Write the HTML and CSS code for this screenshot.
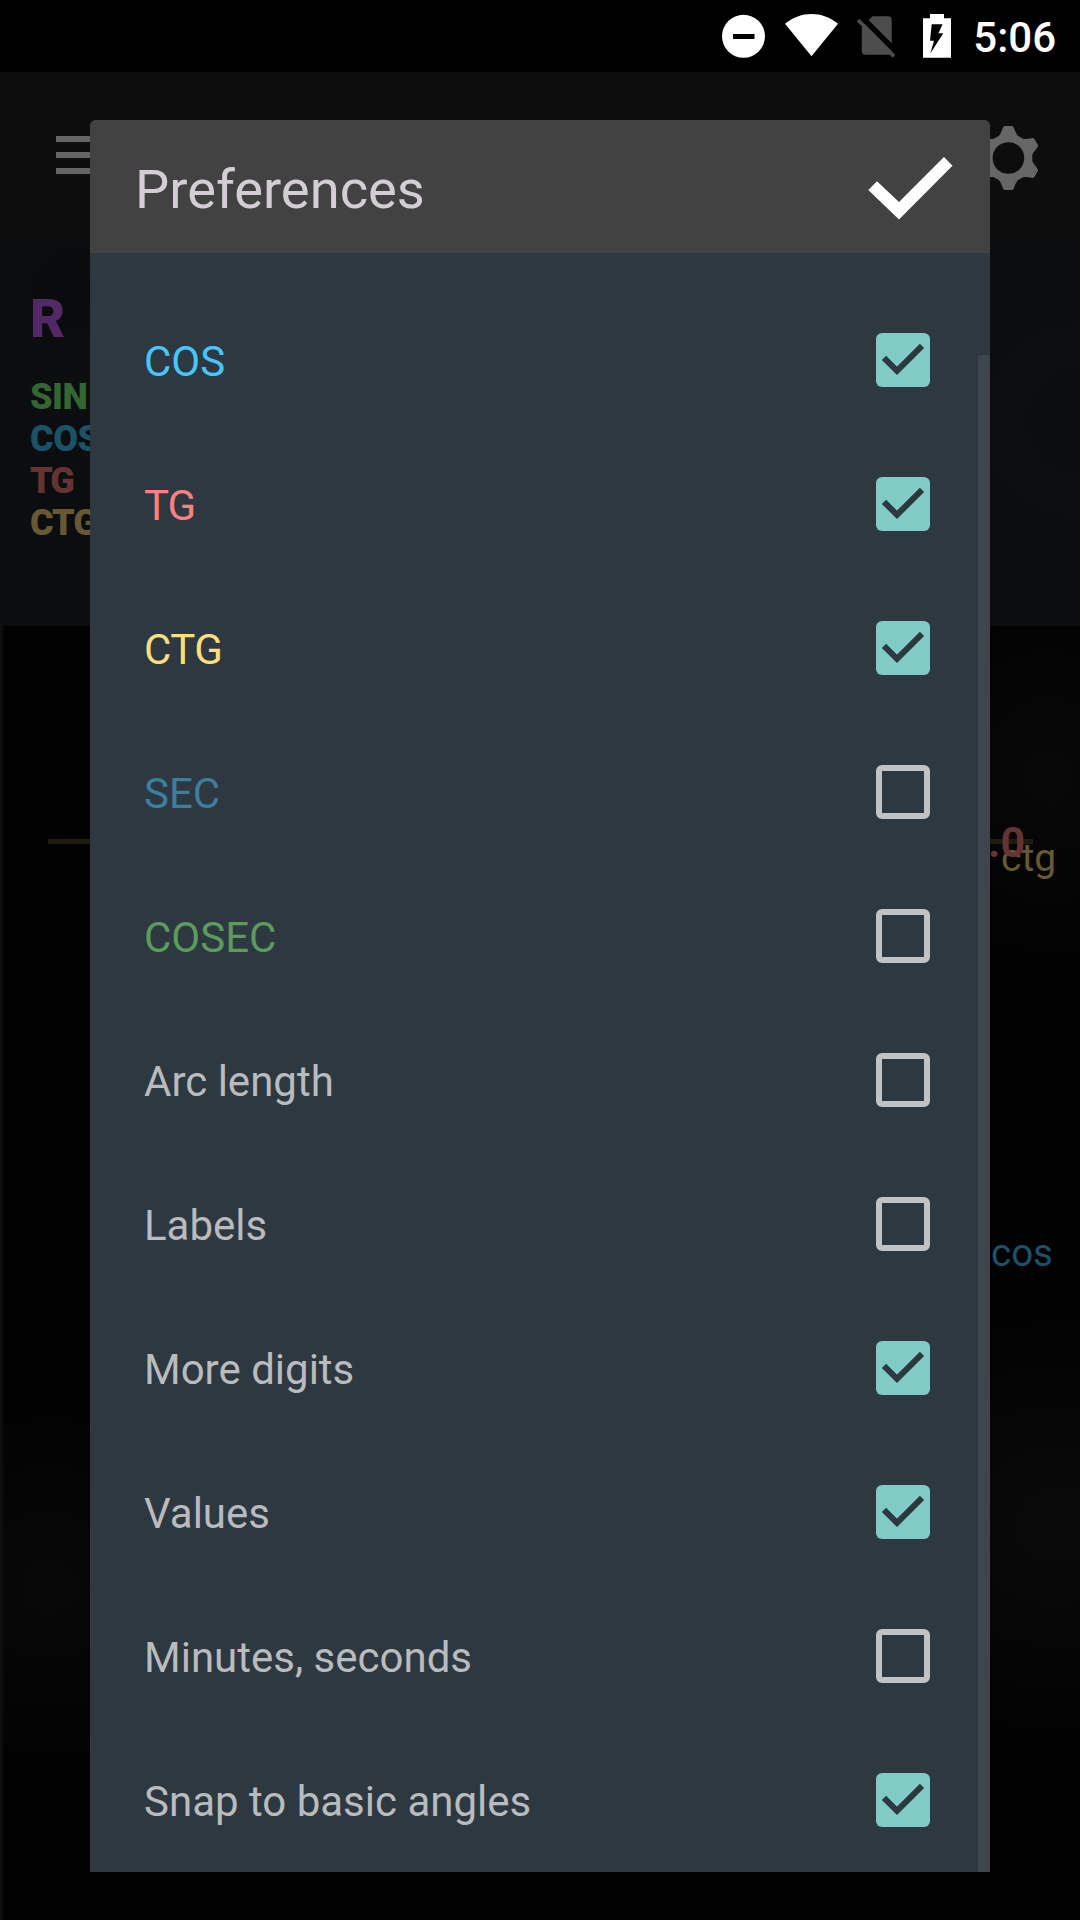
FILE: index.html
```html
<!DOCTYPE html>
<html lang="en">
<head>
<meta charset="utf-8">
<title>Preferences</title>
<link rel="stylesheet" href="styles.css">
</head>
<body>
<div class="screen">
  <header class="status-bar">
    <svg class="status-icons" width="256" height="72" viewBox="704 0 256 72">
      <circle cx="743.5" cy="36.3" r="21.5" fill="#fff"/>
      <path d="M733 34h21.500v5h-21.500z" fill="#000"/>
      <path d="M785 23.700C801 10.800 822 10.800 838 23.700L811.500 56.300z" fill="#fff"/>
      <path d="M872.500 16.300H888a3.700 3.700 0 0 1 3.700 3.700V51a3.700 3.700 0 0 1-3.700 3.700H865.500a3.700 3.700 0 0 1-3.700-3.700V27z" fill="#4d4d4d"/>
      <path d="M861.500 17L898 53.500" stroke="#000" stroke-width="5.500"/>
      <path d="M858 20L894 56.300" stroke="#4d4d4d" stroke-width="3.800"/>
      <path d="M930 14h14v4.300h7V57.700h-28V18.300h7z" fill="#fff"/>
      <path d="M931.700 24.300H942.600L938.400 33.300H943.300L930.300 53.600L934 40.800H930z" fill="#000"/>
    </svg>
    <span class="clock">5:06</span>
  </header>

  <nav class="toolbar">
    <div class="menu-icon"><i></i><i></i><i></i></div>
    <svg class="gear" width="66" height="66" viewBox="-33.400 -33 66 66">
      <defs><path id="tooth" d="M-11-20Q-7.500-24-5.500-30Q-5-32-3.500-32H3.500Q5-32 5.500-30Q7.500-24 11-20z"/></defs>
      <g fill="#666">
        <use href="#tooth"/>
        <use href="#tooth" transform="rotate(60)"/>
        <use href="#tooth" transform="rotate(120)"/>
        <use href="#tooth" transform="rotate(180)"/>
        <use href="#tooth" transform="rotate(240)"/>
        <use href="#tooth" transform="rotate(300)"/>
        <circle r="24"/>
      </g>
      <circle r="15.800" fill="#0d0d0d"/>
    </svg>
  </nav>

  <section class="readout">
    <div class="radius">R</div>
    <div class="fn fn-sin">SIN</div>
    <div class="fn fn-cos">COS</div>
    <div class="fn fn-tg">TG</div>
    <div class="fn fn-ctg">CTG</div>
  </section>

  <main class="plot">
    <div class="axis"></div>
    <span class="plot-label label-ctg">ctg</span>
    <span class="plot-label label-value">.0</span>
    <span class="plot-label label-cos">cos</span>
  </main>

  <div class="dialog">
    <div class="dialog-header">
      <h1>Preferences</h1>
      <svg class="accept" width="86" height="66" viewBox="868 156 86 66">
        <path d="M868.300 190L877 181.300L899 202L944 157L952.500 165.700L899 219.500z" fill="#fff"/>
      </svg>
    </div>
    <div class="options">
      <label class="row cos"><span>COS</span><svg class="box on" viewBox="0 0 54 54"><path d="M8 24.800L21 37.800L46 12.800"/></svg></label>
      <label class="row tg"><span>TG</span><svg class="box on" viewBox="0 0 54 54"><path d="M8 24.800L21 37.800L46 12.800"/></svg></label>
      <label class="row ctg"><span>CTG</span><svg class="box on" viewBox="0 0 54 54"><path d="M8 24.800L21 37.800L46 12.800"/></svg></label>
      <label class="row sec"><span>SEC</span><i class="box"></i></label>
      <label class="row cosec"><span>COSEC</span><i class="box"></i></label>
      <label class="row"><span>Arc length</span><i class="box"></i></label>
      <label class="row"><span>Labels</span><i class="box"></i></label>
      <label class="row"><span>More digits</span><svg class="box on" viewBox="0 0 54 54"><path d="M8 24.800L21 37.800L46 12.800"/></svg></label>
      <label class="row"><span>Values</span><svg class="box on" viewBox="0 0 54 54"><path d="M8 24.800L21 37.800L46 12.800"/></svg></label>
      <label class="row"><span>Minutes, seconds</span><i class="box"></i></label>
      <label class="row"><span>Snap to basic angles</span><svg class="box on" viewBox="0 0 54 54"><path d="M8 24.800L21 37.800L46 12.800"/></svg></label>
      <div class="scrollbar"></div>
    </div>
  </div>
</div>
</body>
</html>
```
FILE: styles.css
```css
* { box-sizing: border-box; }

body {
  margin: 0;
  background: #000;
  font-family: Roboto, sans-serif;
}

.screen {
  position: relative;
  display: flex;
  flex-direction: column;
  width: 1080px;
  height: 1920px;
  overflow: hidden;
}

.status-bar {
  display: flex;
  justify-content: flex-end;
  align-items: center;
  gap: 13px;
  height: 72px;
  padding-right: 24px;
  background: #000;
}

.clock {
  color: #fff;
  font-size: 42px;
  font-weight: 500;
  line-height: 48px;
  padding-top: 4px;
}

.toolbar {
  display: flex;
  justify-content: space-between;
  align-items: flex-start;
  height: 168px;
  padding: 53px 39px 0 56px;
  background: #0d0d0d;
}

.menu-icon {
  display: flex;
  flex-direction: column;
  gap: 10px;
  width: 57px;
  padding-top: 11px;
}

.menu-icon i {
  height: 6px;
  background: #666;
}

.readout {
  height: 386px;
  padding: 47px 30px 0;
  background:
    radial-gradient(circle at 75px 50px, #090a0b, transparent 75px),
    radial-gradient(circle at 1080px 180px, #0b0d0f 0 50px, #0c0e10 75px, transparent 100px),
    #0b0d0f;
  font-weight: 900;
}

.radius {
  color: #522866;
  font-size: 54px;
  line-height: 63px;
  margin-bottom: 26px;
}

.fn {
  font-size: 36px;
  line-height: 42px;
  letter-spacing: -0.5px;
}

.fn-sin { color: #336633; }
.fn-cos { color: #1c516a; }
.fn-tg { color: #663333; letter-spacing: -2px; }
.fn-ctg { color: #665933; letter-spacing: -1px; }

.plot {
  position: relative;
  flex: 1;
  background:
    linear-gradient(90deg, #111 0, transparent 5px),
    radial-gradient(ellipse at 1060px 900px, #0a0a0a, transparent 260px),
    radial-gradient(ellipse at 1050px 150px, #080808, transparent 180px),
    radial-gradient(ellipse at 50px 960px, #080808, transparent 200px),
    #020202;
}

.axis {
  position: absolute;
  left: 48px;
  top: 213px;
  width: 985px;
  height: 5px;
  background: #211c10;
}

.plot-label {
  position: absolute;
  line-height: 44px;
  white-space: nowrap;
}

.label-ctg {
  left: 1001px;
  top: 210px;
  color: #665933;
  font-size: 39px;
}

.label-value {
  left: 988px;
  top: 194px;
  color: #663333;
  font-size: 43px;
  font-weight: 700;
}

.label-cos {
  left: 991px;
  top: 605px;
  color: #1c516a;
  font-size: 38.5px;
}

.dialog {
  position: absolute;
  left: 90px;
  top: 120px;
  width: 900px;
  height: 1752px;
  display: flex;
  flex-direction: column;
  overflow: hidden;
  border-radius: 6px 6px 0 0;
  background: #2e3840;
}

.dialog-header {
  display: flex;
  justify-content: space-between;
  height: 133px;
  padding: 36px 36px 0 45px;
  background: #424242;
}

.dialog-header h1 {
  margin: 0;
  padding-top: 2px;
  color: #d3ced3;
  font-size: 54.3px;
  font-weight: 400;
  line-height: 63px;
}

.options {
  position: relative;
  flex: 1;
  padding: 35px 60px 0 54px;
}

.row {
  display: flex;
  justify-content: space-between;
  align-items: center;
  height: 144px;
  color: #b9bbbe;
  font-size: 42px;
}

.row span { padding-top: 2px; }

.row.cos { color: #47c5ff; }
.row.tg { color: #ff8080; letter-spacing: -1px; }
.row.ctg { color: #ffde80; letter-spacing: -0.5px; }
.row.sec { color: #3b7e9f; }
.row.cosec { color: #5b9b5d; }

.box {
  width: 54px;
  height: 54px;
  border: 6px solid #c0c3c5;
  border-radius: 6px;
}

.box.on {
  border: 0;
  background: #80cbc4;
}

.box path {
  fill: none;
  stroke: #2e3840;
  stroke-width: 6px;
}

.scrollbar {
  position: absolute;
  top: 102px;
  right: 0;
  bottom: 0;
  width: 12px;
  background: #3e454f;
}
```
